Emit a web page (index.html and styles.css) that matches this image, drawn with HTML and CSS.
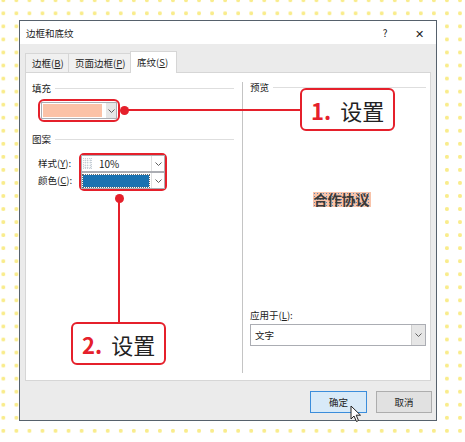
FILE: index.html
```html
<!DOCTYPE html>
<html lang="zh-CN">
<head>
    <meta charset="UTF-8">
    <meta name="viewport" content="width=device-width, initial-scale=1.0">
    <title>边框和底纹</title>
    <link rel="stylesheet" href="styles.css">
</head>
<body>
<div class="page">
    <div class="dialog">
        <div class="titlebar">
            <span class="title">边框和底纹</span>
            <span class="help">?</span>
            <span class="close">✕</span>
        </div>

        <div class="tabs">
            <div class="tab tab-b">边框(<u>B</u>)</div>
            <div class="tab tab-p">页面边框(<u>P</u>)</div>
            <div class="tab tab-s active">底纹(<u>S</u>)</div>
        </div>

        <div class="panel">
            <!-- 左侧：填充 / 图案 -->
            <div class="col-left">
                <div class="group-title"><span>填充</span></div>
                <div class="mark fill-mark">
                    <div class="combo fill-combo">
                        <div class="swatch salmon"></div>
                        <div class="drop">
                            <svg width="7" height="4" viewBox="0 0 7 4"><path d="M0.5 0.5 L3.5 3.5 L6.5 0.5" fill="none" stroke="#606060"/></svg>
                        </div>
                    </div>
                </div>

                <div class="group-title pattern-title"><span>图案</span></div>
                <div class="pattern-rows">
                    <div class="labels">
                        <div>样式(<u>Y</u>):</div>
                        <div>颜色(<u>C</u>):</div>
                    </div>
                    <div class="mark pattern-mark">
                        <div class="combo small-combo">
                            <div class="value">
                                <span class="dots-box"></span>
                                <span class="pct">10%</span>
                            </div>
                            <div class="drop">
                                <svg width="7" height="4" viewBox="0 0 7 4"><path d="M0.5 0.5 L3.5 3.5 L6.5 0.5" fill="none" stroke="#606060"/></svg>
                            </div>
                        </div>
                        <div class="combo small-combo">
                            <div class="value focus">
                                <span class="swatch blue"></span>
                            </div>
                            <div class="drop">
                                <svg width="7" height="4" viewBox="0 0 7 4"><path d="M0.5 0.5 L3.5 3.5 L6.5 0.5" fill="none" stroke="#606060"/></svg>
                            </div>
                        </div>
                    </div>
                </div>
            </div>

            <div class="divider"></div>

            <!-- 右侧：预览 -->
            <div class="col-right">
                <div class="group-title"><span>预览</span></div>
                <div class="preview"><span class="sample">合作协议</span></div>
                <div class="apply-label">应用于(<u>L</u>):</div>
                <div class="combo apply-combo">
                    <span class="apply-value">文字</span>
                    <div class="drop">
                        <svg width="7" height="4" viewBox="0 0 7 4"><path d="M0.5 0.5 L3.5 3.5 L6.5 0.5" fill="none" stroke="#606060"/></svg>
                    </div>
                </div>
            </div>
        </div>

        <div class="buttons">
            <button class="btn ok">确定</button>
            <button class="btn">取消</button>
        </div>
    </div>

    <!-- 标注 -->
    <div class="dot dot-1"></div>
    <div class="line line-1"></div>
    <div class="callout callout-1"><b>1.</b><span>设置</span></div>

    <div class="dot dot-2"></div>
    <div class="line line-2"></div>
    <div class="callout callout-2"><b>2.</b><span>设置</span></div>

    <svg class="cursor" width="13" height="18" viewBox="0 0 13 18">
        <path d="M1 1 L1 14 L4 11 L6.5 16.5 L8.5 15.5 L6.2 10.2 L10.5 10.2 Z" fill="#fff" stroke="#222" stroke-width="1" stroke-linejoin="round"/>
    </svg>
</div>
</body>
</html>
```

FILE: styles.css
```css
html, body { margin: 0; padding: 0; }
body { font-family: "Noto Sans CJK SC", "Liberation Sans", sans-serif; font-size: 9.5px; color: #222; }

.page {
    position: relative;
    width: 465px;
    height: 442px;
    overflow: hidden;
    background-color: #fff;
    background-image: radial-gradient(circle, #f9ec8c 1.7px, transparent 2.3px);
    background-size: 13.06px 13.06px;
    background-position: -3.2px 6.8px;
    padding-top: 20px;
    box-sizing: border-box;
}

.dialog {
    margin-left: 19px;
    width: 418px;
    height: 401px;
    box-sizing: border-box;
    border: 1px solid #56616c;
    background: #ebebeb;
}

.titlebar { height: 23px; background: #fff; display: flex; align-items: center; padding: 0 8px 0 6px; }
.title { flex: 1; }
.help { width: 20px; text-align: center; font-size: 10px; margin-right: 15px; }
.close { width: 18px; text-align: center; font-size: 11px; }

.tabs { display: flex; align-items: flex-end; height: 21px; margin-top: 7px; padding-left: 5px; }
.tab { height: 19px; box-sizing: border-box; border: 1px solid #d6d6d6; border-bottom: none; background: #f0f0f0; padding-left: 6px; line-height: 18px; }
.tab-b { width: 44px; }
.tab-p { width: 63px; margin-left: -1px; }
.tab-s { width: 47px; margin-left: -1px; }
.tab.active { height: 22px; margin-bottom: -1px; background: #fff; position: relative; z-index: 1; line-height: 20px; }

.panel {
    margin-left: 5px;
    width: 406px;
    height: 309px;
    box-sizing: border-box;
    border: 1px solid #d6d6d6;
    background: #fff;
    display: flex;
}

.col-left { width: 216px; padding-top: 8px; }
.col-right { flex: 1; padding-top: 7px; }
.divider { width: 1px; background: #c4c4c4; margin: 9px 0 7px; }

.group-title { display: flex; align-items: center; height: 14px; padding-left: 6px; margin-right: 8px; }
.group-title::after { content: ""; flex: 1; border-top: 1px solid #dedede; margin-left: 4px; }
.col-right .group-title { padding-left: 7px; margin-right: 4px; }
.pattern-title { margin-top: 10px; }

.mark { border: 2px solid #e5202b; border-radius: 6px; }
.fill-mark { display: inline-flex; padding: 1px; margin: 4px 0 0 12px; }
.pattern-mark { width: 84px; border-radius: 5px; }

.combo { display: flex; border: 1px solid #abadb3; background: #fff; box-sizing: border-box; }
.drop { display: flex; align-items: center; justify-content: center; background: #e6e6e6; }

.fill-combo { width: 76px; height: 17px; }
.fill-combo .drop { width: 10px; margin-left: 3px; }
.swatch { display: block; }
.salmon { width: 60px; height: 13px; margin: 1px; background: #fbc2a7; }

.pattern-rows { display: flex; margin: 7px 0 0 12px; }
.labels { width: 41px; padding-top: 2px; }
.labels div { height: 17px; line-height: 17px; }

.small-combo { height: 17px; }
.small-combo .value { flex: 1; display: flex; align-items: center; }
.small-combo .drop { width: 12px; background: #fff; border-left: 1px solid #e0e0e0; }
.dots-box {
    width: 9px;
    height: 11px;
    margin-left: 1px;
    background-image: radial-gradient(circle, #9aa9b8 0.6px, transparent 0.9px);
    background-size: 2.5px 2.5px;
    border: 1px dotted #c8d0d8;
    box-sizing: border-box;
}
.pct { margin-left: 7px; font-size: 10px; }
.value.focus { margin: 1px 1px 0 0; border: 1px dotted #6a6a6a; padding: 1px 0 1px 0; }
.blue { width: 100%; height: 12px; background: #1a72b1; }

.preview { height: 211px; display: flex; align-items: center; justify-content: center; padding-left: 10px; }
.sample {
    font-size: 14px;
    font-weight: bold;
    line-height: 15px;
    padding: 0 1px;
    color: #3a3a3a;
    background-color: #f8c3aa;
    background-image: radial-gradient(circle, #5d86b0 0.5px, transparent 0.8px);
    background-size: 3px 3px;
}
.apply-label { margin: 3px 0 0 7px; height: 14px; line-height: 14px; }
.apply-combo { margin: 2px 4px 0 7px; height: 22px; align-items: center; }
.apply-value { flex: 1; padding-left: 4px; }
.apply-combo .drop { width: 13px; height: 100%; background: #e6e6e6; border-left: 1px solid #cfcfcf; }

.buttons { display: flex; justify-content: flex-end; gap: 9px; padding-right: 4px; margin-top: 10px; }
.btn { font-family: inherit; font-size: 9.5px; color: #222; height: 22px; padding: 0; border: 1px solid #adadad; background: #e1e1e1; width: 56px; }
.btn.ok { width: 57px; background: #d8eaf8; border-color: #3b8ddb; }

/* 标注 */
.dot { position: absolute; width: 9px; height: 9px; border-radius: 50%; background: #e5202b; }
.dot-1 { left: 120px; top: 106px; }
.dot-2 { left: 115px; top: 194px; }
.line { position: absolute; background: #e5202b; }
.line-1 { left: 124px; top: 109px; width: 177px; height: 2px; }
.line-2 { left: 118px; top: 198px; width: 2px; height: 125px; }

.callout {
    position: absolute;
    width: 95px;
    height: 43px;
    box-sizing: border-box;
    border: 2px solid #e5202b;
    border-radius: 6px;
    background: #fff;
    display: flex;
    align-items: center;
    padding-left: 9px;
    font-size: 22px;
    line-height: 1;
}
.callout b { color: #e5202b; font-weight: bold; margin-right: 9px; }
.callout span { color: #222; }
.callout-1 { left: 300px; top: 88px; }
.callout-2 { left: 71px; top: 322px; }

.cursor { position: absolute; left: 350px; top: 405px; }
```
